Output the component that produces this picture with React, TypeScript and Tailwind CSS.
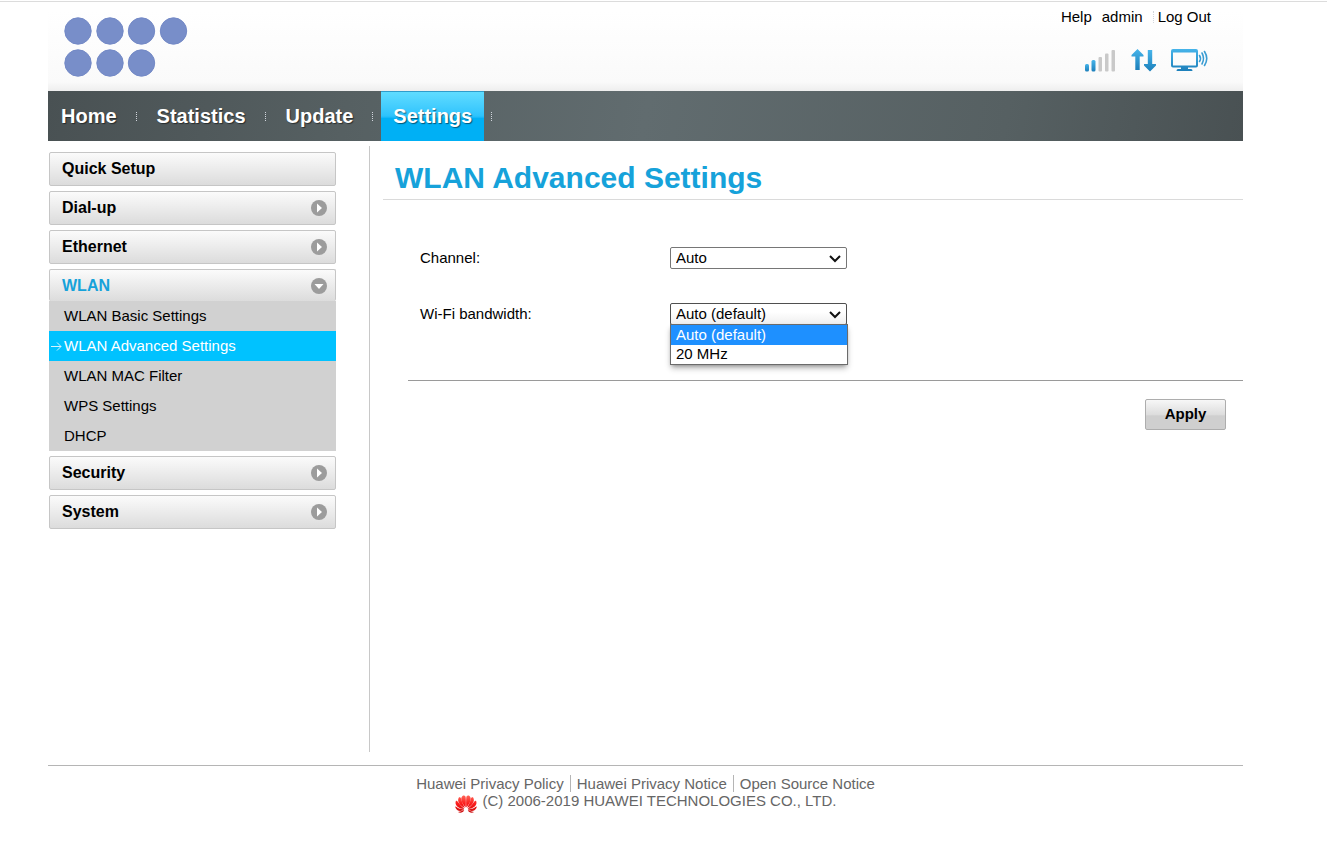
import { ComponentProps, useState } from "react";
import clsx from "clsx";

const navItems = ["Home", "Statistics", "Update", "Settings"];

const menuItems = [
  { name: "Quick Setup", children: [] },
  { name: "Dial-up", children: ["Mobile Connection", "Profile Management"] },
  { name: "Ethernet", children: ["Ethernet Settings", "Ethernet Status"] },
  {
    name: "WLAN",
    children: [
      "WLAN Basic Settings",
      "WLAN Advanced Settings",
      "WLAN MAC Filter",
      "WPS Settings",
      "DHCP",
    ],
  },
  { name: "Security", children: ["Firewall Switch", "DMZ Settings"] },
  { name: "System", children: ["Device Information", "Reboot"] },
];

const bandwidths = ["Auto (default)", "20 MHz"];

const footerLinks = [
  "Huawei Privacy Policy",
  "Huawei Privacy Notice",
  "Open Source Notice",
];

const Logo = () => (
  <svg width="124" height="60" viewBox="0 0 124 60" aria-hidden="true">
    <g fill="#788ec9" stroke="#7389c6" strokeWidth="1">
      <circle cx="14" cy="14" r="13.2" />
      <circle cx="46" cy="14" r="13.2" />
      <circle cx="77.5" cy="14" r="13.2" />
      <circle cx="109.5" cy="14" r="13.2" />
      <circle cx="14" cy="46" r="13.2" />
      <circle cx="46" cy="46" r="13.2" />
      <circle cx="77.5" cy="46" r="13.2" />
    </g>
  </svg>
);

const StatusIcons = () => (
  <svg width="124" height="26" viewBox="0 0 124 26" aria-hidden="true">
    <defs>
      <linearGradient id="blue" x1="0" y1="0" x2="0" y2="1">
        <stop offset="0" stopColor="#46b4ea" />
        <stop offset="1" stopColor="#1c7fba" />
      </linearGradient>
    </defs>
    <rect x="1" y="16" width="4" height="7.5" rx="1.5" fill="url(#blue)" />
    <rect x="7.5" y="12" width="4" height="11.5" rx="1.5" fill="url(#blue)" />
    <g fill="#c9c9c9">
      <rect x="14.5" y="9" width="3.5" height="14.5" rx="1" />
      <rect x="21" y="5.5" width="3.5" height="18" rx="1" />
      <rect x="27.5" y="2" width="3.5" height="21.5" rx="1" />
    </g>
    <g fill="url(#blue)">
      <path d="M53.5 1 L59.5 7 V8.5 H55.7 V22 H51.300 V8.500 H47.500 V7 Z" />
      <path d="M66 23.500 L60 17.500 V16 H63.800 V2 H68.200 V16 H72 V17.500 Z" />
      <path
        fillRule="evenodd"
        d="M89 1 H112 Q114 1 114 3 V17.500 Q114 19.500 112 19.500 H104 V21 H107 Q108.500 21 108.500 23 H92.500 Q92.500 21 94 21 H97 V19.500 H89 Q87 19.500 87 17.500 V3 Q87 1 89 1 Z M89 4.500 V17.500 H112 V4.500 Z"
      />
    </g>
    <g fill="none" stroke="#3a9dd3" strokeWidth="1.600" strokeLinecap="round">
      <path d="M115.500 7.500 Q117.500 10.500 115.500 13.500" />
      <path d="M118 5 Q121 10.500 118 16" />
      <path d="M120.500 3.500 Q125 10.500 120.500 17.500" />
    </g>
  </svg>
);

const MenuArrow = ({ open }: { open: boolean }) => (
  <svg width="16" height="16" viewBox="0 0 16 16" aria-hidden="true">
    <circle cx="8" cy="8" r="8" fill="#9c9c9c" />
    {open ? (
      <path d="M3.5 6 H12.5 L8 11 Z" fill="#fff" />
    ) : (
      <path d="M6 3.500 L11 8 L6 12.500 Z" fill="#fff" />
    )}
  </svg>
);

const HuaweiLogo = () => (
  <svg width="22" height="18" viewBox="0 0 22 18" aria-hidden="true">
    <defs>
      <linearGradient id="petal" x1="0" y1="0" x2="0" y2="18" gradientUnits="userSpaceOnUse">
        <stop offset="0" stopColor="#ff6a5c" />
        <stop offset="0.5" stopColor="#fb1a1a" />
        <stop offset="1" stopColor="#c80c0c" />
      </linearGradient>
    </defs>
    <g fill="url(#petal)">
      <path d="M10.6 12.500 C6.500 8 5 3 7.500 1 C9 0 10.600 0.600 10.700 2.500 C11 6 10.900 9 10.600 12.500 Z" />
      <path d="M9.800 13 C4.500 10.500 1.500 6 4 2.300 C5 1.800 5.800 2.400 6.200 4 C7 7.500 8.500 10 9.800 13 Z" />
      <path d="M9.300 14 C3.500 14.200 -1 10 1 5.800 C2 5.300 2.800 6.500 3.800 8 C5.500 10.500 7.500 12 9.300 14 Z" />
      <path d="M9.200 14.500 C6 17 1.500 16.500 0 11.500 C1 11.300 2 12.500 3.500 13.200 C5.500 14 7 14.200 9.200 14.500 Z" />
      <path d="M9.200 15 C8.500 17.500 5 18.500 3 17 C5 16.500 7 16 9.200 15 Z" />
      <path d="M11.400 12.500 C15.500 8 17 3 14.500 1 C13 0 11.400 0.600 11.300 2.500 C11 6 11.100 9 11.400 12.500 Z" />
      <path d="M12.200 13 C17.500 10.500 20.500 6 18 2.300 C17 1.800 16.200 2.400 15.800 4 C15 7.500 13.500 10 12.200 13 Z" />
      <path d="M12.700 14 C18.500 14.200 23 10 21 5.800 C20 5.300 19.200 6.500 18.200 8 C16.500 10.500 14.500 12 12.700 14 Z" />
      <path d="M12.800 14.500 C16 17 20.500 16.500 22 11.500 C21 11.300 20 12.500 18.500 13.200 C16.500 14 15 14.200 12.800 14.500 Z" />
      <path d="M12.800 15 C13.500 17.500 17 18.500 19 17 C17 16.500 15 16 12.800 15 Z" />
    </g>
  </svg>
);

const Header = () => (
  <header className="flex h-[89px] justify-between bg-linear-to-b from-white from-10% via-[#fafafa] via-90% to-[#eeeeee] pt-[15px] pl-4">
    <Logo />
    <div className="flex flex-col items-end pr-8">
      <div className="-mt-2 flex items-center leading-4">
        <a href="#help" className="mr-2.5">Help</a>
        <a href="#user">admin</a>
        <span className="mr-1 ml-2.5 h-3 border-l border-dotted border-gray-300" />
        <a href="#logout">Log Out</a>
      </div>
      <div className="mt-[23px] pr-[3px]">
        <StatusIcons />
      </div>
    </div>
  </header>
);

const NavBar = () => (
  <nav className="flex h-[50px] bg-[linear-gradient(100deg,#495153,#566062_25%,#616c6f_50%,#566062_80%,#495153)] pl-px">
    {navItems.map((item) => (
      <div key={item} className="flex items-center">
        <a
          href={`#${item.toLowerCase()}`}
          className={clsx(
            "flex h-full items-center px-3 text-xl font-bold text-white text-shadow-[1px_1px_1px_#00000080]",
            item === "Settings" &&
              "border-y border-t-[#2f9ccb] border-b-[#00b0f5] bg-linear-to-b from-[#5fdcff] via-[#2cc3fd] via-50% to-[#00b0f5] to-55%"
          )}
        >
          {item}
        </a>
        <span className="mr-2 ml-[7px] h-[9px] border-l border-dotted border-gray-300" />
      </div>
    ))}
  </nav>
);

const SideMenu = () => {
  const [openMenu, setOpenMenu] = useState("WLAN");

  return (
    <aside className="mt-1.5 flex w-[287px] shrink-0 flex-col gap-[5px]">
      {menuItems.map((menu) => {
        const open = menu.name === openMenu;
        return (
          <div key={menu.name}>
            <button
              type="button"
              onClick={() => setOpenMenu(open ? "" : menu.name)}
              className={clsx(
                "flex w-full items-center justify-between rounded-xs border border-[#c6c6c6] bg-linear-to-b from-[#fbfbfb] to-[#dcdcdc] pr-2 pl-3 text-base font-bold",
                open ? "h-8 border-b-0 text-[#16a2da]" : "h-[34px]"
              )}
            >
              {menu.name}
              {menu.children.length > 0 && <MenuArrow open={open} />}
            </button>
            {open && (
              <ul className="bg-[#d1d1d1]">
                {menu.children.map((child) => {
                  const active = child === "WLAN Advanced Settings";
                  return (
                    <li key={child}>
                      <a
                        href="#wlan"
                        className={clsx(
                          "flex h-[30px] items-center",
                          active ? "bg-[#00c2ff] pl-0.5 text-white" : "pl-[15px]"
                        )}
                      >
                        {active && (
                          <svg
                            width="11"
                            height="10"
                            viewBox="0 0 11 10"
                            className="mr-0.5"
                            fill="none"
                            stroke="#d5f4ff"
                            aria-hidden="true"
                          >
                            <path d="M0 5.5 H10 M6 1.500 L10 5.500 L6 9.500" />
                          </svg>
                        )}
                        {child}
                      </a>
                    </li>
                  );
                })}
              </ul>
            )}
          </div>
        );
      })}
    </aside>
  );
};

const Select = ({ className, ...props }: ComponentProps<"select">) => (
  <div className="relative">
    <select
      {...props}
      className={clsx(
        "block h-[22px] w-[177px] appearance-none rounded-xs border pr-5 pl-[5px] leading-5",
        className
      )}
    />
    <svg
      width="12"
      height="8"
      viewBox="0 0 12 8"
      className="pointer-events-none absolute top-2 right-1.5"
      fill="none"
      stroke="#111"
      strokeWidth="2"
      aria-hidden="true"
    >
      <path d="M1 1 L6 6 L11 1" />
    </svg>
  </div>
);

const WlanForm = () => {
  const [bandwidth, setBandwidth] = useState(bandwidths[0]);
  const [listOpen, setListOpen] = useState(true);

  const handlePick = (value: string) => {
    setBandwidth(value);
    setListOpen(false);
  };

  return (
    <form onSubmit={(e) => e.preventDefault()}>
      <div className="ml-[25px] border-b border-[#9a9a9a] pt-[47px] pb-[55px] pl-3">
        <div className="flex items-center">
          <label htmlFor="channel" className="w-[250px] leading-[22px]">Channel:</label>
          <Select id="channel" className="border-[#767676] bg-white">
            <option>Auto</option>
            <option>1</option>
            <option>6</option>
            <option>11</option>
          </Select>
        </div>
        <div className="mt-[34px] flex items-center">
          <label htmlFor="bandwidth" className="w-[250px] leading-[22px]">Wi-Fi bandwidth:</label>
          <div className="relative">
            <Select
              id="bandwidth"
              value={bandwidth}
              onChange={(e) => handlePick(e.target.value)}
              className="border-[#4f4f4f] bg-linear-to-b from-white from-40% to-[#efefef]"
            >
              {bandwidths.map((item) => (
                <option key={item}>{item}</option>
              ))}
            </Select>
            {listOpen && (
              <ul
                role="listbox"
                aria-label="Wi-Fi bandwidth"
                className="absolute top-[21px] left-0 w-[178px] border border-[#6b6b6b] bg-white shadow-md shadow-black/30"
              >
                {bandwidths.map((item) => (
                  <li
                    key={item}
                    role="option"
                    aria-selected={item === bandwidth}
                    onClick={() => handlePick(item)}
                    className={clsx(
                      "cursor-default pl-[5px]",
                      item === bandwidth
                        ? "bg-[#1e90ff] leading-5 text-white"
                        : "pb-px leading-[18px]"
                    )}
                  >
                    {item}
                  </li>
                ))}
              </ul>
            )}
          </div>
        </div>
      </div>
      <div className="flex justify-end pt-[18px] pr-[17px]">
        <button
          type="submit"
          className="h-[31px] w-[81px] rounded-xs border border-[#adadad] bg-linear-to-b from-[#f7f7f7] via-[#dddddd] via-50% to-[#cfcfcf] to-55% font-bold"
        >
          Apply
        </button>
      </div>
    </form>
  );
};

const Footer = () => (
  <footer className="mt-[13px] flex flex-col items-center border-t border-[#b5b5b5] pt-[9px] leading-[17px] text-[#666666]">
    <div className="flex">
      {footerLinks.map((link, i) => (
        <a
          key={link}
          href="#notice"
          className={clsx(i > 0 && "ml-1.5 border-l border-[#b5b5b5] pl-1.5")}
        >
          {link}
        </a>
      ))}
    </div>
    <div className="flex items-start gap-1.5">
      <span className="pt-[3px]">
        <HuaweiLogo />
      </span>
      <span>(C) 2006-2019 HUAWEI TECHNOLOGIES CO., LTD.</span>
    </div>
  </footer>
);

export default function App() {
  return (
    <div className="bg-white pt-px font-['Liberation_Sans',Arial,sans-serif] text-[15px] text-black">
      <div className="border-t border-[#dcdcdc]">
        <div className="mr-[84px] ml-12">
          <Header />
          <NavBar />
          <div className="mt-[5px] flex min-h-[606px] pl-px">
            <SideMenu />
            <main className="ml-[33px] flex-1 border-l border-[#c8c8c8] pl-[13px]">
              <h1 className="border-b border-[#dadada] pt-3 pb-px pl-3 text-[30px] leading-10 font-bold text-[#16a2da]">
                WLAN Advanced Settings
              </h1>
              <WlanForm />
            </main>
          </div>
          <Footer />
        </div>
      </div>
    </div>
  );
}
